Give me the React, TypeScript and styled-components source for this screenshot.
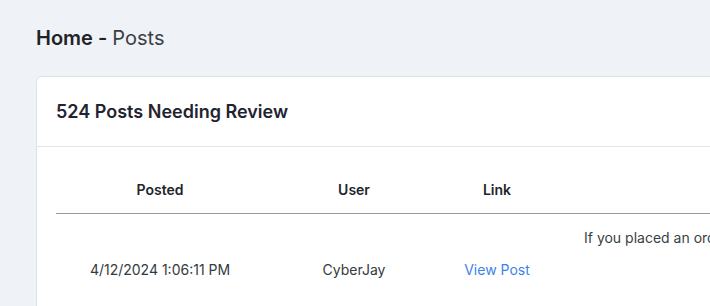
import React from "react";
import styled, { createGlobalStyle } from "styled-components";

const Global = createGlobalStyle`
  html, body {
    margin: 0;
    padding: 0;
    background: #eff2f6;
    overflow: hidden;
    font-family: Inter, "Noto Sans", sans-serif;
    color: #212529;
  }
  * { box-sizing: border-box; }
`;

const Page = styled.div`
  padding: 24px 0 0 36px;
  width: 1200px;
`;

const Breadcrumb = styled.h1`
  margin: 0;
  height: 28px;
  line-height: 28px;
  font-size: 20px;
  font-weight: 600;
  color: #1f2328;
`;

const Crumb = styled.span`
  font-weight: 400;
  color: #3a3f47;
`;

const Card = styled.section`
  margin-top: 24px;
  width: 1000px;
  background: #ffffff;
  border: 1px solid #dde1e6;
  border-radius: 6px;
`;

const CardHeader = styled.header`
  height: 70px;
  padding: 0 19px;
  display: flex;
  align-items: center;
  border-bottom: 1px solid #e1e4e8;
`;

const CardTitle = styled.h2`
  margin: 0;
  font-size: 18px;
  font-weight: 600;
  color: #1f2430;
`;

const CardBody = styled.div`
  padding: 20px 19px;
`;

const Table = styled.table`
  border-collapse: collapse;
  table-layout: fixed;
  width: 900px;
  font-size: 14px;
`;

const Th = styled.th<{ $w: number }>`
  width: ${(p) => p.$w}px;
  padding: 12px 0;
  line-height: 22px;
  font-weight: 600;
  text-align: center;
  color: #212529;
  border-bottom: 1px solid #9a9a9a;
`;

const Td = styled.td`
  padding: 12px 0;
  line-height: 24px;
  text-align: center;
  vertical-align: middle;
  color: #333a40;
`;

const ContentTd = styled.td`
  padding: 12px 0 12px 34px;
  line-height: 24px;
  text-align: left;
  vertical-align: top;
  color: #3a3f45;
  white-space: nowrap;
`;

const Embed = styled.div`
  height: 64px;
`;

const PostLink = styled.a`
  color: #3d84e8;
  text-decoration: none;
`;

export default function App() {
  return (
    <>
      <Global />
      <Page>
        <Breadcrumb>
          Home - <Crumb>Posts</Crumb>
        </Breadcrumb>
        <Card>
          <CardHeader>
            <CardTitle>524 Posts Needing Review</CardTitle>
          </CardHeader>
          <CardBody>
            <Table>
              <thead>
                <tr>
                  <Th $w={208}>Posted</Th>
                  <Th $w={180}>User</Th>
                  <Th $w={106}>Link</Th>
                  <Th $w={406}>Content</Th>
                </tr>
              </thead>
              <tbody>
                <tr>
                  <Td>4/12/2024 1:06:11 PM</Td>
                  <Td>CyberJay</Td>
                  <Td>
                    <PostLink href="#">View Post</PostLink>
                  </Td>
                  <ContentTd>
                    If you placed an order with us recently, please check your inbox.
                    <Embed />
                  </ContentTd>
                </tr>
              </tbody>
            </Table>
          </CardBody>
        </Card>
      </Page>
    </>
  );
}
